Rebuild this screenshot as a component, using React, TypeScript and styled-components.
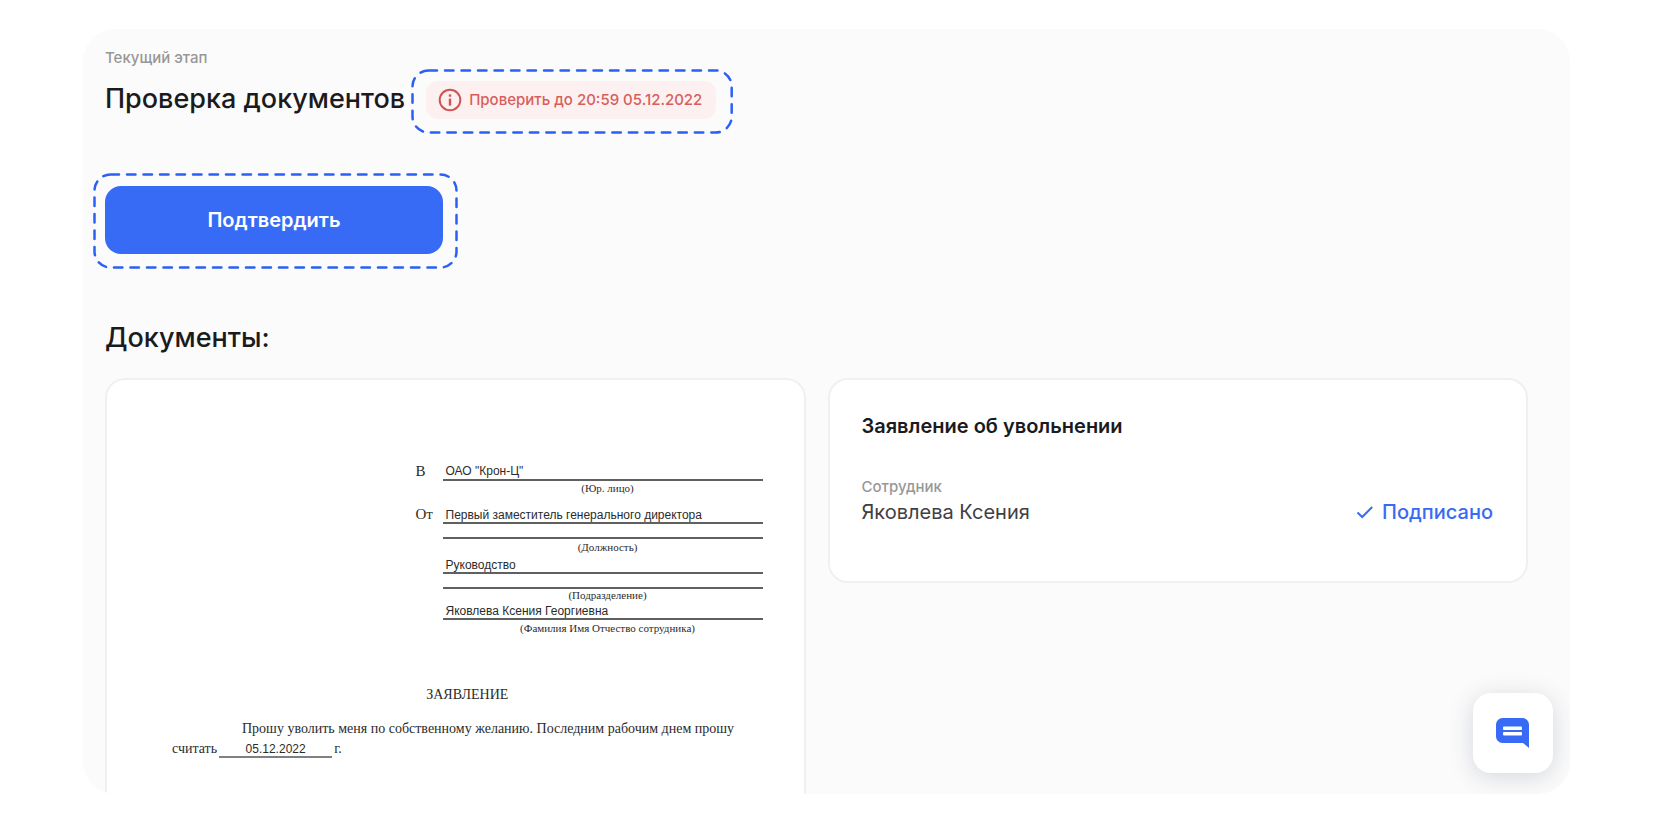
import React from "react";
import styled, { createGlobalStyle } from "styled-components";

const GlobalStyle = createGlobalStyle`
  *, *::before, *::after { box-sizing: border-box; }
  body {
    margin: 0;
    background: #fff;
    color: #1b1b1d;
    font-family: Inter, "Liberation Sans", sans-serif;
  }
  h1, h2, h3, p { margin: 0; }
`;

const Page = styled.div`
  padding: 29px 83px 35px;
`;

const Panel = styled.main`
  position: relative;
  overflow: hidden;
  padding: 19px 42px 0 22px;
  border-radius: 32px;
  background: #fbfbfb;
`;

const Caption = styled.p`
  color: #979797;
  font-size: 15px;
  font-weight: 500;
  line-height: 20px;
`;

const StageRow = styled.div`
  display: flex;
  align-items: center;
  gap: 6px;
  margin-top: 1px;
`;

const Heading = styled.h1`
  padding-bottom: 5px;
  font-size: 27px;
  font-weight: 500;
  line-height: 32px;
  white-space: nowrap;
`;

const Highlight = styled.div<{ $pad: string }>`
  position: relative;
  display: flex;
  width: fit-content;
  padding: ${(p) => p.$pad};
`;

const Outline = styled.svg`
  position: absolute;
  inset: 0;
  width: 100%;
  height: 100%;
  pointer-events: none;

  rect {
    width: calc(100% - 3px);
    height: calc(100% - 3px);
    fill: none;
    stroke: #2a60f4;
    stroke-width: 2.5;
    stroke-dasharray: 8.5 8;
    stroke-linecap: round;
  }
`;

const Deadline = styled.div`
  display: flex;
  align-items: center;
  gap: 7px;
  height: 38px;
  padding: 0 14px 0 12px;
  border-radius: 12px;
  background: #fdf0f0;
  color: #d65f5d;
  font-size: 15px;
  font-weight: 500;
  line-height: 20px;
  white-space: nowrap;
`;

const ActionArea = styled.div`
  margin: 39px 0 0 -12px;
`;

const ConfirmButton = styled.button`
  width: 338px;
  height: 68px;
  border: 0;
  border-radius: 16px;
  background: #386bf5;
  color: #fff;
  font: 600 20px/24px Inter, "Liberation Sans", sans-serif;
  cursor: pointer;
`;

const SectionTitle = styled.h2`
  margin-top: 53px;
  font-size: 27px;
  font-weight: 500;
  line-height: 32px;
`;

const Columns = styled.div`
  display: grid;
  grid-template-columns: 1fr 1fr;
  align-items: start;
  gap: 22px;
  margin-top: 24px;
`;

const Card = styled.section`
  border: 2px solid #f0f0f2;
  border-radius: 20px;
  background: #fff;
`;

const Sheet = styled(Card)`
  padding: 82px 41px 35px 65px;
  border-bottom: 0;
  border-radius: 20px 20px 0 0;
  color: #2b2b2b;
  font: 14px/20px "Liberation Serif", serif;
`;

const Addressee = styled.div`
  display: grid;
  grid-template-columns: 27px 320px;
  justify-content: end;
  row-gap: 10px;
`;

const Preposition = styled.span`
  font-size: 15px;
  line-height: 18px;
`;

const Value = styled.div<{ $line?: number }>`
  height: 19px;
  padding-left: 3px;
  border-bottom: 2px solid #606060;
  font-family: "Liberation Sans", sans-serif;
  font-size: 12px;
  line-height: ${(p) => p.$line ?? 20}px;
`;

const BlankLine = styled.div`
  height: 15px;
  border-bottom: 2px solid #606060;
`;

const Hint = styled.div<{ $line?: number }>`
  padding-left: 10px;
  font-size: 11px;
  line-height: ${(p) => p.$line ?? 16}px;
  text-align: center;
`;

const SheetTitle = styled.h3`
  margin-top: 49px;
  font-size: 14px;
  font-weight: 400;
  line-height: 20px;
  text-align: center;
`;

const Statement = styled.p`
  margin-top: 14px;
  text-indent: 70px;
`;

const DateLine = styled.span`
  display: inline-block;
  text-indent: 0;
  white-space: nowrap;
`;

const DateBlank = styled.span`
  display: inline-block;
  width: 113px;
  height: 17px;
  margin: 0 2px;
  border-bottom: 2px solid #808080;
  font: 12px/16px "Liberation Sans", sans-serif;
  text-align: center;
`;

const SignCard = styled(Card)`
  padding: 34px 33px 57px 32px;
`;

const CardTitle = styled.h3`
  font-size: 20px;
  font-weight: 600;
  line-height: 24px;
`;

const SignRow = styled.div`
  display: flex;
  align-items: flex-end;
  justify-content: space-between;
  margin-top: 39px;
`;

const PersonName = styled.p`
  margin-top: 3px;
  color: #404044;
  font-size: 20px;
  line-height: 24px;
`;

const Status = styled.span`
  display: flex;
  align-items: center;
  gap: 8px;
  color: #386bf5;
  font-size: 20px;
  font-weight: 500;
  line-height: 24px;
`;

const ChatButton = styled.button`
  position: absolute;
  right: 17px;
  bottom: 21px;
  display: grid;
  place-items: center;
  width: 80px;
  height: 80px;
  padding: 0;
  border: 0;
  border-radius: 18px;
  background: #fff;
  box-shadow: 0 4px 24px rgba(40, 50, 90, 0.18);
  cursor: pointer;
`;

const DashedOutline = () => (
  <Outline aria-hidden="true">
    <rect x="1.5" y="1.5" rx="16" />
  </Outline>
);

const InfoIcon = () => (
  <svg width="24" height="24" viewBox="0 0 24 24" fill="none" aria-hidden="true">
    <circle cx="12" cy="12" r="10.3" stroke="#d25452" strokeWidth="2" />
    <rect x="10.8" y="10.6" width="2.4" height="7" fill="#d25452" />
    <rect x="10.8" y="6.4" width="2.4" height="2.3" fill="#d25452" />
  </svg>
);

const CheckIcon = () => (
  <svg width="18" height="14" viewBox="0 0 18 14" fill="none" aria-hidden="true">
    <path d="M1.5 7.5 6.2 12 16.2 2" stroke="currentColor" strokeWidth="2" />
  </svg>
);

const ChatIcon = () => (
  <svg width="34" height="30" viewBox="0 0 34 30" aria-hidden="true">
    <path
      d="M6.5 0h20a6.500 6.500 0 0 1 6.500 6.500V30l-6-5H6.500A6.500 6.500 0 0 1 0 18.500v-12A6.500 6.500 0 0 1 6.500 0Z"
      fill="#386bf5"
    />
    <rect x="7" y="8.500" width="19" height="3.500" rx="1" fill="#fff" />
    <rect x="7" y="14" width="19" height="3.500" rx="1" fill="#fff" />
  </svg>
);

export default function App() {
  return (
    <Page>
      <GlobalStyle />
      <Panel>
        <Caption>Текущий этап</Caption>
        <StageRow>
          <Heading>Проверка документов</Heading>
          <Highlight $pad="12px 17px 15px 15px">
            <Deadline>
              <InfoIcon />
              Проверить до 20:59 05.12.2022
            </Deadline>
            <DashedOutline />
          </Highlight>
        </StageRow>

        <ActionArea>
          <Highlight $pad="13px 15px 15px 12px">
            <ConfirmButton type="button">Подтвердить</ConfirmButton>
            <DashedOutline />
          </Highlight>
        </ActionArea>

        <SectionTitle>Документы:</SectionTitle>
        <Columns>
          <Sheet>
            <Addressee>
              <Preposition>В</Preposition>
              <div>
                <Value $line={18}>ОАО "Крон-Ц"</Value>
                <Hint $line={14}>(Юр. лицо)</Hint>
              </div>
              <Preposition>От</Preposition>
              <div>
                <Value>Первый заместитель генерального директора</Value>
                <BlankLine />
                <Hint>(Должность)</Hint>
                <Value>Руководство</Value>
                <BlankLine />
                <Hint $line={12}>(Подразделение)</Hint>
                <Value>Яковлева Ксения Георгиевна</Value>
                <Hint>(Фамилия Имя Отчество сотрудника)</Hint>
              </div>
            </Addressee>
            <SheetTitle>ЗАЯВЛЕНИЕ</SheetTitle>
            <Statement>
              Прошу уволить меня по собственному желанию. Последним рабочим днем прошу{" "}
              <DateLine>
                считать<DateBlank>05.12.2022</DateBlank>г.
              </DateLine>
            </Statement>
          </Sheet>

          <SignCard>
            <CardTitle>Заявление об увольнении</CardTitle>
            <SignRow>
              <div>
                <Caption>Сотрудник</Caption>
                <PersonName>Яковлева Ксения</PersonName>
              </div>
              <Status>
                <CheckIcon />
                Подписано
              </Status>
            </SignRow>
          </SignCard>
        </Columns>

        <ChatButton type="button" aria-label="Открыть чат">
          <ChatIcon />
        </ChatButton>
      </Panel>
    </Page>
  );
}
